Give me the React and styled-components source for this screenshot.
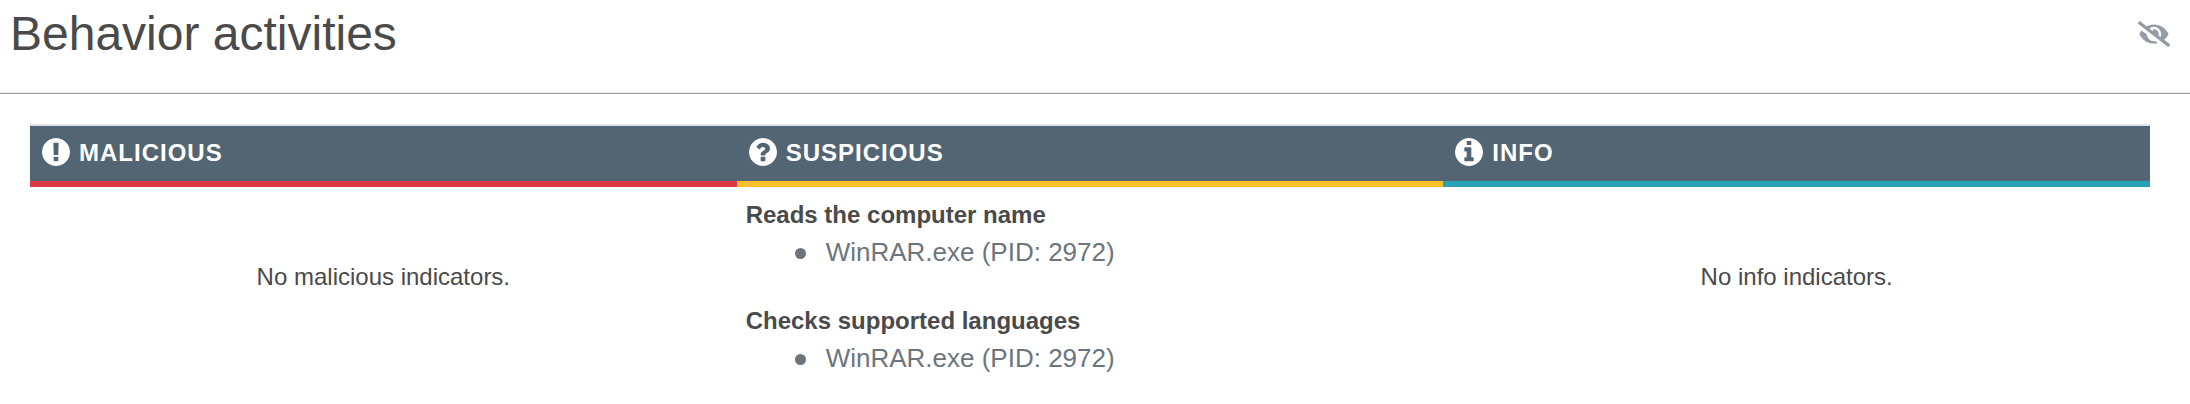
import React from "react";
import styled, { createGlobalStyle } from "styled-components";
import { FaEyeSlash } from "react-icons/fa";

const GlobalStyle = createGlobalStyle`
  *, *::before, *::after { box-sizing: border-box; }
  body {
    margin: 0;
    background: #fff;
    color: #4a4a4a;
    font-family: "Liberation Sans", Arial, sans-serif;
    font-size: 24px;
    line-height: 36px;
  }
`;

const Header = styled.header`
  display: flex;
  align-items: flex-start;
  justify-content: space-between;
  padding: 5px 20px 30px 10px;
  border-bottom: 1px solid #9b9b9b;
  box-shadow: inset 0 -1px #ececec;
`;

const Title = styled.h1`
  margin: 0;
  font-size: 48px;
  font-weight: 400;
  line-height: 58px;
`;

const ToggleButton = styled.button`
  display: flex;
  margin: 16px 0 0;
  padding: 0;
  border: 0;
  background: none;
  color: #949da5;
  cursor: pointer;

  svg {
    display: block;
    width: 32px;
    height: 26px;
  }
`;

const Main = styled.main`
  padding: 30px 40px 0 30px;
`;

const Table = styled.table`
  width: 100%;
  table-layout: fixed;
  border-collapse: separate;
  border-spacing: 0;
`;

const HeadCell = styled.th`
  padding: 10px 12px 11px;
  border-top: 2px solid #dee2e6;
  border-bottom: 6px solid ${(p) => p.$accent};
  background: #536572;
  color: #fff;
  text-align: left;
  letter-spacing: 1px;
  line-height: 34px;
  text-transform: uppercase;
`;

const HeadLabel = styled.div`
  display: flex;
  align-items: center;
  gap: 9px;

  svg {
    flex: none;
    width: 28px;
    height: 28px;
    margin-bottom: 2px;
    fill: currentColor;
  }
`;

const Cell = styled.td`
  padding: 10px 9px;
  vertical-align: top;
`;

const Empty = styled.p`
  margin: 62px 0 0;
  text-align: center;
`;

const Indicator = styled.section`
  & + & {
    margin-top: 32px;
  }
`;

const IndicatorName = styled.h2`
  margin: 0;
  font-size: 24px;
  font-weight: 700;
  line-height: 36px;
`;

const ProcessList = styled.ul`
  margin: 0;
  padding-left: 49px;
  list-style: none;
  color: #6c757d;
  font-size: 26px;
  line-height: 38px;
`;

const Process = styled.li`
  display: flex;
  align-items: center;
  gap: 20px;

  &::before {
    content: "";
    width: 11px;
    height: 11px;
    margin-top: 2px;
    border-radius: 50%;
    background: currentColor;
  }
`;

const icons = {
  exclamation:
    "M896 128q209 0 385.5 103t279.5 279.5 103 385.5-103 385.5-279.5 279.5-385.5 103-385.5-103-279.5-279.5-103-385.5 103-385.5 279.5-279.5 385.5-103zm128 1247v-190q0-14-9-23.5t-22-9.5h-192q-13 0-23 10t-10 23v190q0 13 10 23t23 10h192q13 0 22-9.5t9-23.5zm-2-344l18-621q0-12-10-18-10-8-24-8h-220q-14 0-24 8-10 6-10 18l17 621q0 10 10 17.5t24 7.5h185q14 0 23.5-7.5t10.5-17.5z",
  question:
    "M1024 1376v-192q0-14-9-23t-23-9h-192q-14 0-23 9t-9 23v192q0 14 9 23t23 9h192q14 0 23-9t9-23zm256-672q0-88-55.5-163t-138.5-116-170-41q-243 0-371 213-15 24 8 42l132 100q7 6 19 6 16 0 25-12 53-68 86-92 34-24 86-24 48 0 85.5 26t37.5 59q0 38-20 61t-68 45q-63 28-115.5 86.5t-52.5 125.5v36q0 14 9 23t23 9h192q14 0 23-9t9-23q0-19 21.5-49.5t54.5-49.5q32-18 49-28.5t46-35 44.5-48 28-60.5 12.5-81zm384 192q0 209-103 385.5t-279.5 279.5-385.5 103-385.5-103-279.5-279.5-103-385.5 103-385.5 279.5-279.5 385.5-103 385.5 103 279.5 279.5 103 385.5z",
  info:
    "M1152 1376v-160q0-14-9-23t-23-9h-96v-512q0-14-9-23t-23-9h-320q-14 0-23 9t-9 23v160q0 14 9 23t23 9h96v320h-96q-14 0-23 9t-9 23v160q0 14 9 23t23 9h448q14 0 23-9t9-23zm-128-896v-160q0-14-9-23t-23-9h-192q-14 0-23 9t-9 23v160q0 14 9 23t23 9h192q14 0 23-9t9-23zm640 416q0 209-103 385.5t-279.5 279.5-385.5 103-385.5-103-279.5-279.5-103-385.5 103-385.5 279.5-279.5 385.5-103 385.5 103 279.5 279.5 103 385.5z",
};

const columns = [
  {
    title: "Malicious",
    icon: "exclamation",
    accent: "#dc3848",
    empty: "No malicious indicators.",
    indicators: [],
  },
  {
    title: "Suspicious",
    icon: "question",
    accent: "#ffc02e",
    indicators: [
      { name: "Reads the computer name", processes: ["WinRAR.exe (PID: 2972)"] },
      { name: "Checks supported languages", processes: ["WinRAR.exe (PID: 2972)"] },
    ],
  },
  {
    title: "Info",
    icon: "info",
    accent: "#25a2b8",
    empty: "No info indicators.",
    indicators: [],
  },
];

export default function App() {
  return (
    <>
      <GlobalStyle />
      <Header>
        <Title>Behavior activities</Title>
        <ToggleButton type="button" aria-label="Hide section">
          <FaEyeSlash />
        </ToggleButton>
      </Header>
      <Main>
        <Table>
          <thead>
            <tr>
              {columns.map((c) => (
                <HeadCell key={c.title} scope="col" $accent={c.accent}>
                  <HeadLabel>
                    <svg viewBox="128 128 1536 1536" aria-hidden="true">
                      <path d={icons[c.icon]} />
                    </svg>
                    {c.title}
                  </HeadLabel>
                </HeadCell>
              ))}
            </tr>
          </thead>
          <tbody>
            <tr>
              {columns.map((c) => (
                <Cell key={c.title}>
                  {c.indicators.map((item) => (
                    <Indicator key={item.name}>
                      <IndicatorName>{item.name}</IndicatorName>
                      <ProcessList>
                        {item.processes.map((p) => (
                          <Process key={p}>{p}</Process>
                        ))}
                      </ProcessList>
                    </Indicator>
                  ))}
                  {c.empty && <Empty>{c.empty}</Empty>}
                </Cell>
              ))}
            </tr>
          </tbody>
        </Table>
      </Main>
    </>
  );
}
